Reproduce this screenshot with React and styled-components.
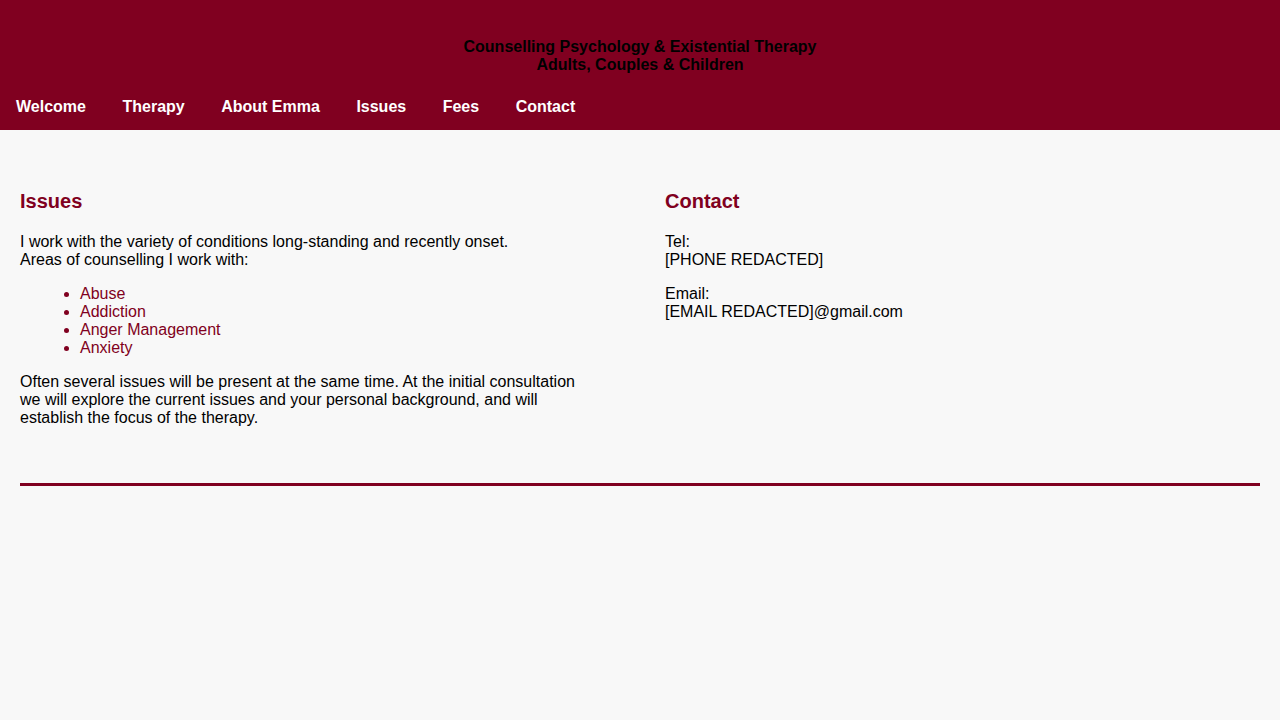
import React from "react";
import styled, { createGlobalStyle } from "styled-components";

const GlobalStyle = createGlobalStyle`
  html, body {
    margin: 0;
    padding: 0;
    background: #f8f8f8;
    font-family: "Liberation Sans", Arial, sans-serif;
    color: #000;
  }
`;

const navItems = ["Welcome", "Therapy", "About Emma", "Issues", "Fees", "Contact"];
const issues = ["Abuse", "Addiction", "Anger Management", "Anxiety"];

const App = () => {
  return (
    <>
      <GlobalStyle />
      <Header>
        <Tagline>
          Counselling Psychology &amp; Existential Therapy
          <br />
          Adults, Couples &amp; Children
        </Tagline>
        <Nav>
          {navItems.map((item) => (
            <NavLink key={item} href="#">
              {item}
            </NavLink>
          ))}
        </Nav>
      </Header>
      <Main>
        <Columns>
          <Column>
            <Heading>Issues</Heading>
            <Para>
              I work with the variety of conditions long-standing and recently onset.
              <br />
              Areas of counselling I work with:
            </Para>
            <IssueList>
              {issues.map((item) => (
                <li key={item}>{item}</li>
              ))}
            </IssueList>
            <Para>
              Often several issues will be present at the same time. At the initial
              consultation we will explore the current issues and your personal
              background, and will establish the focus of the therapy.
            </Para>
          </Column>
          <Column>
            <Heading>Contact</Heading>
            <Para>
              Tel:
              <br />
              [PHONE REDACTED]
            </Para>
            <Para>
              Email:
              <br />
              [EMAIL REDACTED]@gmail.com
            </Para>
          </Column>
        </Columns>
        <Rule />
      </Main>
    </>
  );
};

const Header = styled.header`
  background: #800020;
  height: 130px;
  display: flex;
  flex-direction: column;
  padding-top: 38px;
  box-sizing: border-box;
`;

const Tagline = styled.div`
  text-align: center;
  font-weight: bold;
  font-size: 16px;
  line-height: 18px;
  color: #000;
`;

const Nav = styled.nav`
  display: flex;
  align-items: center;
  height: 48px;
  margin-top: 9px;
  padding-left: 16px;
  gap: 36.5px;
`;

const NavLink = styled.a`
  color: #fff;
  font-weight: bold;
  font-size: 16px;
  text-decoration: none;
`;

const Main = styled.main`
  padding: 60px 20px 0;
`;

const Columns = styled.div`
  display: grid;
  grid-template-columns: 575px 1fr;
  column-gap: 70px;
`;

const Column = styled.section``;

const Heading = styled.h3`
  margin: 0 0 21px;
  font-size: 20px;
  line-height: 22px;
  color: #800020;
  font-weight: bold;
`;

const Para = styled.p`
  margin: 0 0 16px;
  font-size: 16px;
  line-height: 18px;
`;

const IssueList = styled.ul`
  margin: 0 0 16px;
  padding-left: 60px;
  font-size: 16px;
  line-height: 18px;
  color: #800020;
`;

const Rule = styled.div`
  margin-top: 40px;
  height: 3px;
  background: #800020;
`;

export default App;
